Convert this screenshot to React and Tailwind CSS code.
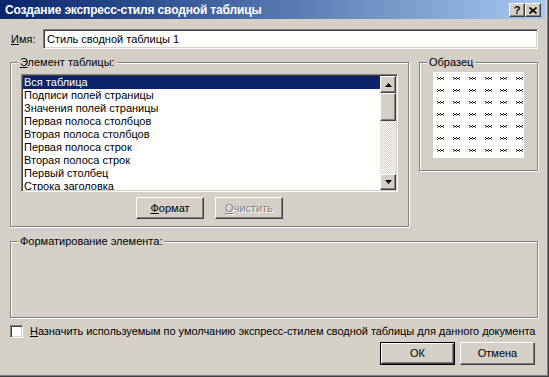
import React from 'react';

// Элементы списка стиля сводной таблицы
const ITEMS = [
  'Вся таблица',
  'Подписи полей страницы',
  'Значения полей страницы',
  'Первая полоса столбцов',
  'Вторая полоса столбцов',
  'Первая полоса строк',
  'Вторая полоса строк',
  'Первый столбец',
  'Строка заголовка',
];

const FONT = "font-['Liberation_Sans',Arial,sans-serif]";

const raised =
  'border border-t-white border-l-white border-r-[#404040] border-b-[#404040] shadow-[inset_-1px_-1px_0_#808080] bg-[#d4d0c8]';

const sunken =
  'border border-t-[#808080] border-l-[#808080] border-r-white border-b-white shadow-[inset_1px_1px_0_#404040,inset_-1px_-1px_0_#d4d0c8]';

const etched = 'border border-[#808080] shadow-[inset_1px_1px_0_#fff,1px_1px_0_#fff]';

const Arrow = ({ down }) => (
  <svg width="7" height="4" viewBox="0 0 7 4">
    {down ? <path d="M0 0h7L3.5 4z" fill="#000" /> : <path d="M0 4h7L3.5 0z" fill="#000" />}
  </svg>
);

// мелкий "волнистый" значок образца
const Mark = () => (
  <svg width="7" height="3" viewBox="0 0 7 3" shapeRendering="crispEdges">
    {[0, 3, 6].map((x) => (
      <rect key={'a' + x} x={x} y="0" width="1" height="1" fill="#000" />
    ))}
    {[1, 2, 4, 5].map((x) => (
      <rect key={'b' + x} x={x} y="1" width="1" height="1" fill="#000" />
    ))}
    {[0, 3, 6].map((x) => (
      <rect key={'c' + x} x={x} y="2" width="1" height="1" fill="#555" />
    ))}
  </svg>
);

const Btn = ({ className = '', children }) => (
  <div className={`${raised} flex items-center justify-center select-none ${className}`}>{children}</div>
);

const Group = ({ label, className, children }) => (
  <div className={`relative ${etched} ${className}`}>
    <span className="absolute -top-[8px] left-[7px] px-[2px] bg-[#d4d0c8] leading-[14px]">{label}</span>
    {children}
  </div>
);

const App = () => {
  return (
    <div className={`w-[549px] h-[377px] border-r border-b border-[#404040] ${FONT} text-[11px] text-black`}>
      <div className="h-full flex flex-col bg-[#d4d0c8] border-r border-b border-[#808080]">
        {/* Заголовок окна */}
        <div className="h-[19px] mr-[2px] flex items-center justify-between pl-[5px] pr-[4px] bg-gradient-to-r from-[#0a246a] to-[#a6caf0]">
          <span className="text-white font-bold text-[12px] leading-none tracking-[-0.15px]">Создание экспресс-стиля сводной таблицы</span>
          <div className="flex mt-[1px]">
            <Btn className="w-[16px] h-[14px] font-bold text-[11px] leading-none">?</Btn>
            <Btn className="w-[16px] h-[14px]">
              <svg width="8" height="7" viewBox="0 0 8 7">
                <path d="M0.5 0.5l7 6M7.5 0.5l-7 6" stroke="#000" strokeWidth="1.6" />
              </svg>
            </Btn>
          </div>
        </div>

        <div className="flex flex-col pl-[10px] pr-[9px]">
          {/* Имя */}
          <div className="flex items-center mt-[10px]">
            <span className="w-[33px] pl-[1px]"><u>И</u>мя:</span>
            <div className={`flex-1 h-[20px] bg-white ${sunken} flex items-center pl-[3px] leading-[14px]`}>Стиль сводной таблицы 1</div>
          </div>

          <div className="flex gap-[10px] mt-[13px] items-start">
            <Group label={<><u>Э</u>лемент таблицы:</>} className="w-[399px] h-[165px] flex flex-col pl-[10px] pt-[11px]">
              <div className={`w-[377px] h-[118px] bg-white ${sunken} flex p-[1px]`}>
                <div className="flex-1 overflow-hidden">
                  {ITEMS.map((item, i) => (
                    <div key={item} className={`pl-[1px] h-[13px] leading-[12px] ${i === 0 ? 'bg-[#0a246a] text-white' : ''}`}>{item}</div>
                  ))}
                </div>
                <div className="w-[16px] flex flex-col">
                  <Btn className="h-[17px]"><Arrow /></Btn>
                  <div className={`h-[28px] ${raised}`} />
                  <div className="flex-1 bg-[image:repeating-conic-gradient(#fff_0_25%,#d4d0c8_0_50%)] bg-[length:2px_2px]" />
                  <Btn className="h-[16px]"><Arrow down /></Btn>
                </div>
              </div>
              <div className="flex justify-center gap-[11px] mt-[5px] pr-[10px]">
                <Btn className="w-[68px] h-[22px] leading-[14px]"><span><u>Ф</u>ормат</span></Btn>
                <Btn className="w-[68px] h-[22px] leading-[14px] text-[#808080] [text-shadow:1px_1px_0_#fff]"><span><u>О</u>чистить</span></Btn>
              </div>
            </Group>

            <Group label="Образец" className="w-[119px] h-[109px] pt-[9px] flex justify-center">
              <div className="w-[91px] h-[86px] bg-white grid grid-cols-6 gap-x-[8px] gap-y-[9px] content-start pl-[4px] pt-[5px]">
                {Array.from({ length: 42 }).map((_, i) => (
                  <Mark key={i} />
                ))}
              </div>
            </Group>
          </div>

          <Group label="Форматирование элемента:" className="h-[77px] mt-[14px]" />

          {/* Флажок по умолчанию */}
          <div className="flex items-center mt-[7px] h-[13px]">
            <div className={`w-[13px] h-[13px] bg-white ${sunken}`} />
            <span className="ml-[7px] whitespace-nowrap tracking-[-0.05px] leading-[13px]"><u>Н</u>азначить используемым по умолчанию экспресс-стилем сводной таблицы для данного документа</span>
          </div>

          <div className="flex justify-end gap-[5px] mt-[4px] mr-[3px]">
            <div className="border border-black">
              <Btn className="w-[73px] h-[21px] leading-[13px]">ОК</Btn>
            </div>
            <Btn className="w-[75px] h-[23px] leading-[13px]">Отмена</Btn>
          </div>
        </div>
      </div>
    </div>
  );
};

export default App;
